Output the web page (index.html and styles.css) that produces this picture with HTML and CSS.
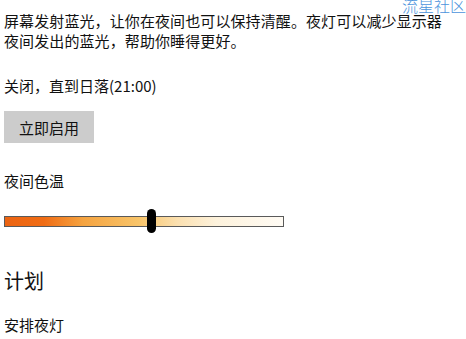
FILE: index.html
```html
<!DOCTYPE html>
<html lang="zh-CN">
<head>
<meta charset="utf-8">
<link rel="stylesheet" href="styles.css">
</head>
<body>
<div class="watermark">流星社区</div>
<main class="page">
  <p class="intro">屏幕发射蓝光，让你在夜间也可以保持清醒。夜灯可以减少显示器<br>夜间发出的蓝光，帮助你睡得更好。</p>
  <p class="status">关闭，直到日落(21:00)</p>
  <button class="btn">立即启用</button>
  <p class="label">夜间色温</p>
  <div class="slider">
    <div class="track"></div>
    <div class="thumb"></div>
  </div>
  <h2 class="heading">计划</h2>
  <p class="label2">安排夜灯</p>
</main>
</body>
</html>
```
FILE: styles.css
```css
html, body {
  margin: 0;
  padding: 0;
  background: #ffffff;
}
body {
  font-family: "Noto Sans CJK SC", "Noto Sans", sans-serif;
  color: #111;
  font-size: 15px;
  position: relative;
  width: 466px;
  height: 339px;
  overflow: hidden;
}
.watermark {
  position: absolute;
  top: -3px;
  left: 402px;
  font-size: 16px;
  line-height: 16px;
  color: #4b94dc;
  font-weight: 300;
}
.page {
  padding: 11px 0 0 4px;
}
p { margin: 0; }
.intro {
  line-height: 20px;
  letter-spacing: 0.1px;
}
.status {
  margin-top: 25px;
  line-height: 20px;
}
.btn {
  display: block;
  margin-top: 15px;
  width: 90px;
  height: 32px;
  border: none;
  background: #cccccc;
  font-family: inherit;
  font-size: 15px;
  color: #111;
  padding: 0;
}
.label {
  margin-top: 28px;
  line-height: 20px;
}
.slider {
  position: relative;
  margin-top: 18px;
  width: 280px;
  height: 24px;
  display: flex;
  align-items: center;
}
.track {
  width: 280px;
  height: 11px;
  box-sizing: border-box;
  border: 1px solid #5a5a5a;
  background: linear-gradient(to right, #ec6412 0%, #f06c14 14%, #f5a340 28%, #f8c469 48%, #fbe0b0 62%, #fdf2dc 76%, #fffbf4 100%);
}
.thumb {
  position: absolute;
  left: 143px;
  top: 0;
  width: 9px;
  height: 24px;
  border-radius: 5px;
  background: #000;
}
.heading {
  margin: 35px 0 0;
  font-size: 20px;
  font-weight: normal;
  color: #111;
  line-height: 26px;
}
.label2 {
  margin-top: 21px;
  line-height: 20px;
}
```
